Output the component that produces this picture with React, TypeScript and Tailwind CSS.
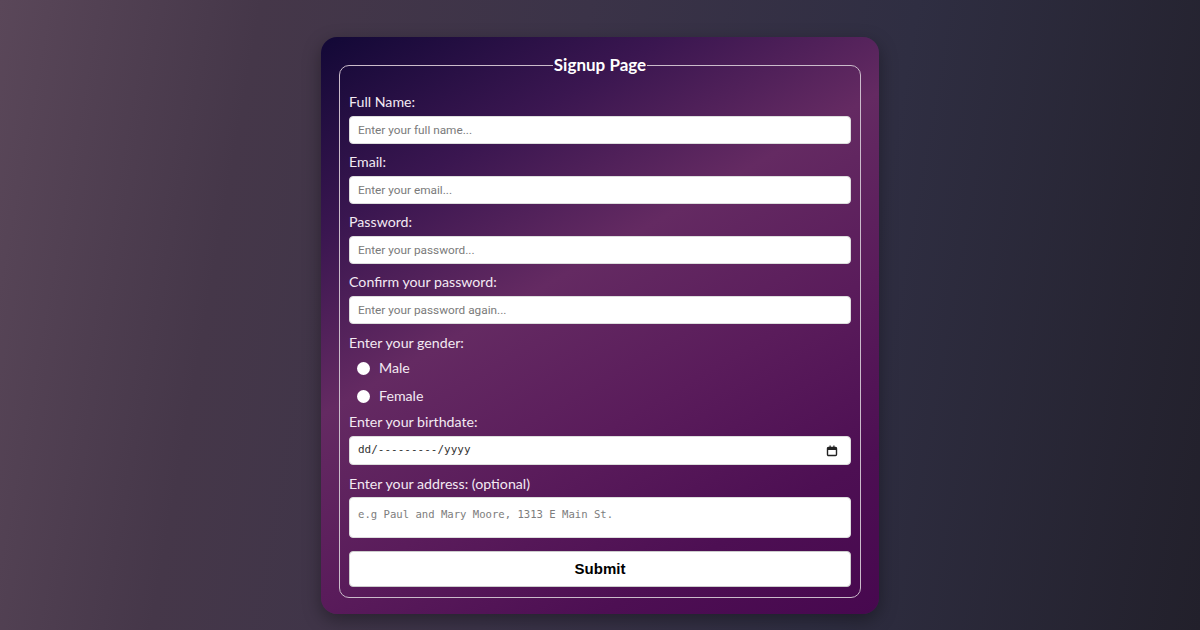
import React from 'react'

const labelCls = 'block text-[14.2px] leading-5 text-[#f3e9f3]'
const inputCls =
  'block w-full h-7 rounded bg-white px-2 text-[11.8px] text-[#333] placeholder:text-[#7a7a7a] outline-none border border-[#ddd]'

export default function App() {
  return (
    <div className="min-h-screen w-full flex justify-center pt-[37px] bg-[linear-gradient(100deg,#5a4759_0%,#453749_20%,#3b3348_45%,#2f2e42_70%,#22202b_100%)] font-['Lato','Noto_Sans',sans-serif]">
      <div className="w-[558px] h-[577px] rounded-2xl px-[18px] pt-[18px] shadow-[0_6px_18px_rgba(0,0,0,0.35)] bg-[linear-gradient(150deg,#120836_0%,#3a1650_22%,#642a62_42%,#5a1c5b_62%,#4d0f53_82%,#47084f_100%)]">
        <fieldset className="border-[1.5px] border-[#cbbccb] rounded-[10px] px-[9px] pb-[10px] pt-[17px]">
          <legend className="mx-auto px-px text-[17px] leading-5 font-bold text-white">Signup Page</legend>

          <div>
            <label className={labelCls}>Full Name:</label>
            <input className={`${inputCls} mt-1 font-['Roboto',sans-serif]`} placeholder="Enter your full name..." />
          </div>
          <div className="mt-2">
            <label className={labelCls}>Email:</label>
            <input className={`${inputCls} mt-1 font-['Roboto',sans-serif]`} placeholder="Enter your email..." />
          </div>
          <div className="mt-2">
            <label className={labelCls}>Password:</label>
            <input className={`${inputCls} mt-1 font-['Roboto',sans-serif]`} placeholder="Enter your password..." />
          </div>
          <div className="mt-2">
            <label className={labelCls}>Confirm your password:</label>
            <input className={`${inputCls} mt-1 font-['Roboto',sans-serif]`} placeholder="Enter your password again..." />
          </div>

          <div className="mt-[9px]">
            <span className={labelCls}>Enter your gender:</span>
            <label className="flex items-center h-7 mt-px pl-2 gap-[9px] text-[14.2px] text-[#f3e9f3]">
              <input type="radio" name="g" className="appearance-none w-[13px] h-[13px] rounded-full bg-white" />
              Male
            </label>
            <label className="flex items-center h-7 pl-2 gap-[9px] text-[14.2px] text-[#f3e9f3]">
              <input type="radio" name="g" className="appearance-none w-[13px] h-[13px] rounded-full bg-white" />
              Female
            </label>
          </div>

          <div className="mt-0.5">
            <label className={labelCls}>Enter your birthdate:</label>
            <div className="mt-1 h-[29px] w-full rounded bg-white border border-[#ddd] px-2 flex items-center justify-between">
              <span className="text-[11px] text-[#333] font-['DejaVu_Sans_Mono',monospace]">dd/---------/yyyy</span>
              <svg width="12" height="12" viewBox="0 0 12 12" className="mr-1">
                <rect x="1.5" y="2.5" width="9" height="8" rx="1" fill="none" stroke="#222" strokeWidth="1.4" />
                <rect x="1.5" y="2.5" width="9" height="2.5" fill="#222" />
                <rect x="3.5" y="0.5" width="1.2" height="2" fill="#222" />
                <rect x="7.3" y="0.5" width="1.2" height="2" fill="#222" />
              </svg>
            </div>
          </div>

          <div className="mt-[9px]">
            <label className={labelCls}>Enter your address: (optional)</label>
            <textarea
              className="mt-[3px] block w-full h-[41px] resize-none rounded bg-white border border-[#ddd] px-2 pt-2 text-[10.6px] leading-4 text-[#333] placeholder:text-[#7d7d7d] outline-none font-['DejaVu_Sans_Mono',monospace]"
              placeholder="e.g Paul and Mary Moore, 1313 E Main St."
            />
          </div>

          <button className="mt-[13px] block w-full h-9 rounded bg-white border border-[#ccc] text-[15px] font-bold text-black font-['Liberation_Sans',Arial,sans-serif]">
            Submit
          </button>
        </fieldset>
      </div>
    </div>
  )
}
